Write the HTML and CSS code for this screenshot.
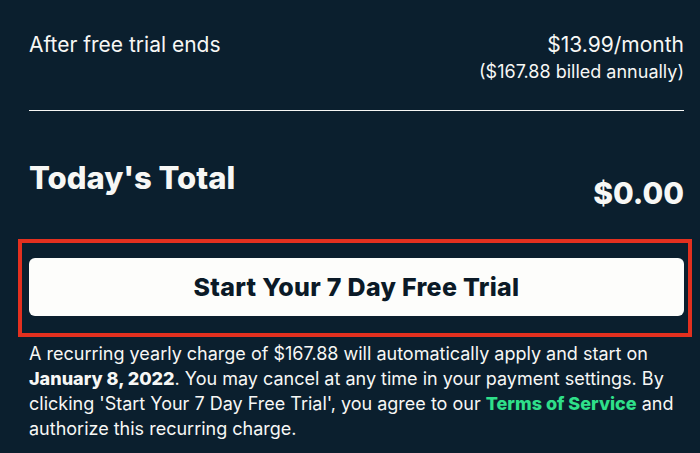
FILE: index.html
```html
<!DOCTYPE html>
<html lang="en">
<head>
    <meta charset="UTF-8">
    <meta name="viewport" content="width=device-width, initial-scale=1.0">
    <title>Checkout</title>
    <link rel="stylesheet" href="styles.css">
</head>
<body>
    <div class="summary">
        <div class="row">
            <span class="label">After free trial ends</span>
            <div class="price">
                <div class="monthly">$13.99/month</div>
                <div class="annual">($167.88 billed annually)</div>
            </div>
        </div>
        <hr class="divider">
        <div class="total">
            <h2>Today's Total</h2>
            <span class="amount">$0.00</span>
        </div>
        <div class="cta">
            <button class="trial-btn">Start Your 7 Day Free Trial</button>
            <div class="highlight"></div>
        </div>
        <p class="terms">
            A recurring yearly charge of $167.88 will automatically apply and start on<br>
            <strong>January 8, 2022</strong>. You may cancel at any time in your payment settings. By<br>
            clicking 'Start Your 7 Day Free Trial', you agree to our <a href="#">Terms of Service</a> and<br>
            authorize this recurring charge.
        </p>
    </div>
</body>
</html>
```

FILE: styles.css
```css
body {
    margin: 0;
    background-color: #0b1f2e;
    color: #f7f7f5;
    font-family: Inter, "Open Sans", sans-serif;
}
.summary {
    padding: 31px 16px 0 29px;
}
.row {
    display: flex;
    justify-content: space-between;
    align-items: flex-start;
}
.label {
    font-size: 21px;
    line-height: 28px;
}
.price {
    text-align: right;
}
.monthly {
    font-size: 21px;
    line-height: 28px;
}
.annual {
    font-size: 18px;
    line-height: 26px;
}
.divider {
    border: none;
    border-top: 1px solid #f7f7f5;
    margin: 25px 0 0 0;
}
.total {
    display: flex;
    justify-content: space-between;
    align-items: flex-start;
    margin-top: 47px;
}
.total h2 {
    margin: 0;
    font-size: 31px;
    line-height: 40px;
    font-weight: 800;
}
.amount {
    margin-top: 15px;
    font-size: 30px;
    line-height: 40px;
    font-weight: 800;
}
.cta {
    position: relative;
    margin-top: 45px;
}
.trial-btn {
    display: block;
    width: 100%;
    height: 58px;
    border: none;
    border-radius: 6px;
    background-color: #fdfdfb;
    color: #0b1a27;
    font-family: inherit;
    font-size: 25px;
    font-weight: 800;
    letter-spacing: 0.3px;
    cursor: pointer;
}
.highlight {
    position: absolute;
    left: -11px;
    right: -8px;
    top: -19px;
    bottom: -21px;
    border: 4px solid #e3301f;
    pointer-events: none;
}
.terms {
    margin: 25px -12px 0 0;
    font-size: 18px;
    line-height: 25px;
    white-space: nowrap;
}
.terms strong {
    font-weight: 800;
}
.terms a {
    color: #2fe08a;
    font-weight: 800;
    text-decoration: none;
}
```
